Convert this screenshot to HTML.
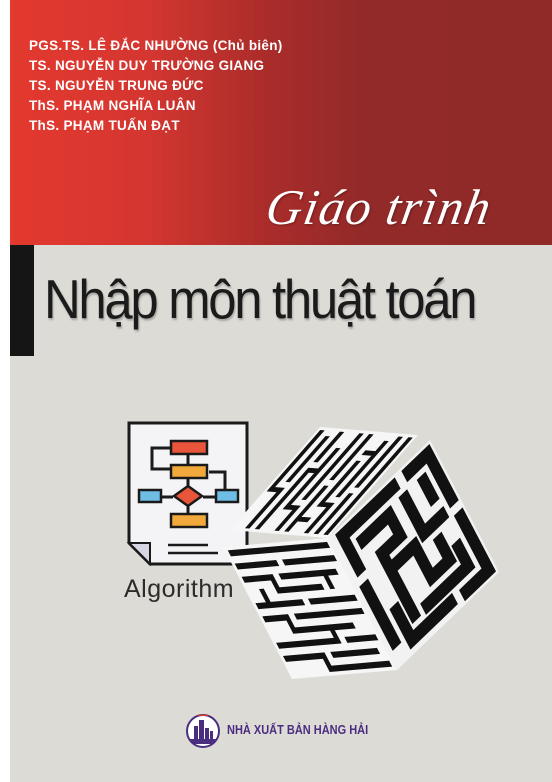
<!DOCTYPE html>
<html><head><meta charset="utf-8">
<style>
html,body{margin:0;padding:0}
body{width:552px;height:782px;position:relative;overflow:hidden;background:#dddbd6;font-family:"Liberation Sans",sans-serif}
#strip{position:absolute;left:0;top:0;width:10px;height:782px;background:#fff}
#red{position:absolute;left:10px;top:0;width:542px;height:245px;background:linear-gradient(90deg,#e3392f 0%,#d53630 25%,#a92c2a 48%,#922a29 65%,#8f2a29 100%)}
#authors{position:absolute;left:29px;top:36px;color:#fff;font-weight:bold;font-size:13.5px;line-height:20px;letter-spacing:0.3px}
#giao{position:absolute;left:272px;top:178px;color:#fff;font-family:"Liberation Serif",serif;font-style:italic;font-size:50px;letter-spacing:1.5px;transform:skewX(-10deg);transform-origin:left top;text-shadow:1px 1px 2px rgba(0,0,0,.3)}
#bar{position:absolute;left:10px;top:245px;width:24px;height:111px;background:#151515}
#title{position:absolute;left:44px;top:267px;font-size:55px;color:#1b1b1b;letter-spacing:-2.5px;transform:scaleX(0.925);transform-origin:left top;text-shadow:1px 2px 2px rgba(0,0,0,.25);white-space:nowrap}
#algo{position:absolute;left:124px;top:575px;font-size:25px;color:#2c2c2c;letter-spacing:0.5px}
#pub{position:absolute;left:227px;top:723px;font-size:12.5px;font-weight:bold;color:#4b2d80;transform:scaleX(0.88);transform-origin:left top;white-space:nowrap}
svg{position:absolute;left:0;top:0}
</style></head><body>
<div id="strip"></div>
<div id="red"></div>
<div id="authors">PGS.TS. LÊ ĐẮC NHƯỜNG (Chủ biên)<br>TS. NGUYỄN DUY TRƯỜNG GIANG<br>TS. NGUYỄN TRUNG ĐỨC<br>ThS. PHẠM NGHĨA LUÂN<br>ThS. PHẠM TUẤN ĐẠT</div>
<div id="giao">Giáo trình</div>
<div id="bar"></div>
<div id="title">Nhập môn thuật toán</div>
<svg width="552" height="782" viewBox="0 0 552 782">
 <defs>
  <g id="maze">
   <rect x="0" y="0" width="100" height="100" fill="#f2f2f2"/>
   <g fill="none" stroke="#111" stroke-width="8.5" stroke-linecap="square">
    <path d="M10 6 H60 M75 6 H94 V40 M10 6 V30 M22 18 H48 V34 H30 V56 M64 18 V44 H82 M82 18 V30 M20 70 V92 H58 M38 46 H54 V70 H72 V56 M94 54 V94 H72 M8 44 V84 M42 82 H82 V68 M30 80 V62"/>
   </g>
  </g>
  <g id="mazef">
   <rect x="0" y="0" width="100" height="100" fill="#f6f6f6"/>
   <g fill="none" stroke="#111" stroke-width="4.5" stroke-linecap="square">
    <path d="M5 5 H95 M5 15 H40 M50 15 H95 M5 25 H30 V35 H70 M40 25 H90 M5 45 H45 M55 45 H95 M5 55 H25 V65 H80 M35 55 H95 M5 75 H60 M70 75 H95 M5 85 H40 V95 H95 M50 85 H90 M80 25 V35 M15 35 V45 M60 65 V75"/>
   </g>
  </g>
 </defs>
 <g>
  <path d="M129 423 H247 V564 H150 L129 543 Z" fill="#f4f4f6" stroke="#1a1a1a" stroke-width="3"/>
  <path d="M129 543 L150 543 L150 564 Z" fill="#d6d6e4" stroke="#1a1a1a" stroke-width="2"/>
  <g stroke="#1a1a1a" stroke-width="3" fill="none">
   <path d="M171 448 H152 V469 H171 M188 452 V466 M188 478 V497 M209 472 H225 V492 M188 504 V515 M150 497 H173 M203 497 H225"/>
  </g>
  <rect x="171" y="441" width="36" height="13" fill="#e8553a" stroke="#1a1a1a" stroke-width="2.5"/>
  <rect x="171" y="465" width="36" height="13" fill="#f2a93b" stroke="#1a1a1a" stroke-width="2.5"/>
  <rect x="139" y="490" width="22" height="12" fill="#6fbde4" stroke="#1a1a1a" stroke-width="2.5"/>
  <rect x="216" y="490" width="22" height="12" fill="#6fbde4" stroke="#1a1a1a" stroke-width="2.5"/>
  <path d="M188 486 L202 496 L188 506 L174 496 Z" fill="#e8553a" stroke="#1a1a1a" stroke-width="2.5"/>
  <rect x="171" y="514" width="36" height="13" fill="#f2a93b" stroke="#1a1a1a" stroke-width="2.5"/>
  <path d="M168 545 H208 M168 553 H218" stroke="#1a1a1a" stroke-width="2.5"/>
 </g>
 <g>
  <g transform="matrix(0.98,0.08,0.90,-1.03,230,530)"><use href="#mazef" transform="rotate(90 50 50)"/></g>
  <g transform="matrix(1.05,-0.09,0.69,1.32,223,547)"><use href="#mazef"/></g>
  <g transform="matrix(1.02,-0.98,0.69,1.32,328,538)"><use href="#maze"/></g>
 </g>
 <g>
  <circle cx="203" cy="731" r="16" fill="#fff" stroke="#4b2d80" stroke-width="2"/>
  <path d="M189 739 H217 L214 744 H192 Z" fill="#4b2d80"/>
  <rect x="194" y="726" width="4" height="13" fill="#4b2d80"/>
  <rect x="199" y="720" width="5" height="19" fill="#4b2d80"/>
  <rect x="205" y="728" width="4" height="11" fill="#4b2d80"/>
  <rect x="210" y="731" width="3" height="8" fill="#4b2d80"/>
  <path d="M196 716 A9 4 0 0 1 210 716" fill="#d53a30"/>
 </g>
</svg>
<div id="algo">Algorithm</div>
<div id="pub">NHÀ XUẤT BẢN HÀNG HẢI</div>
</body></html>
